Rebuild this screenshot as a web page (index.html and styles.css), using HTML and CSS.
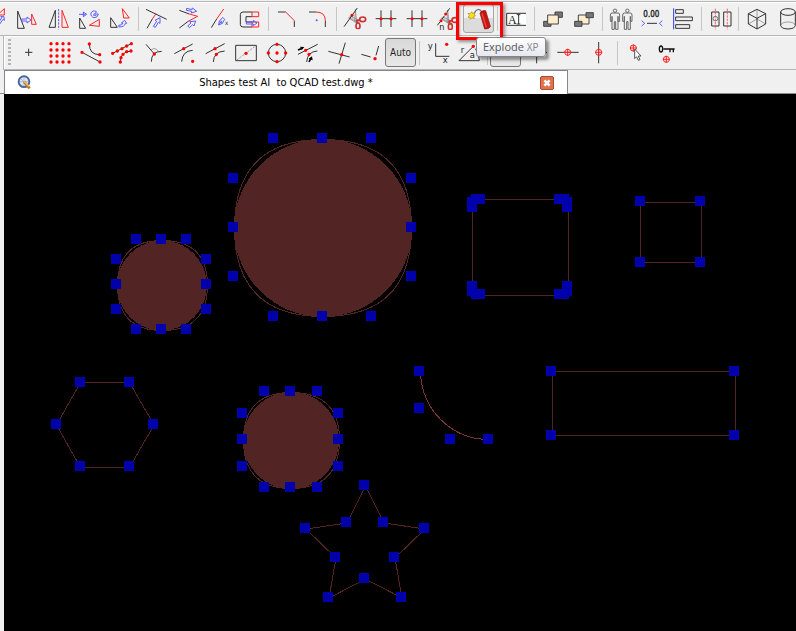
FILE: index.html
```html
<!DOCTYPE html>
<html lang="en">
<head>
<meta charset="utf-8">
<title>Shapes test AI to QCAD test.dwg</title>
<link rel="stylesheet" href="styles.css">
</head>
<body>
<svg class="defs" aria-hidden="true">
  <symbol id="target" viewBox="0 0 24 24"><g class="r target"><circle cx="12" cy="12" r="9"/><path d="M1 12H23M12 1V23"/></g></symbol>
  <symbol id="person" viewBox="0 0 34 66"><g class="g person"><circle cx="17" cy="7" r="5"/><path d="M8 14H26Q31 14 31 20V39H26V24M26 24V63H19V40H15V63H8V24M8 24V39H3V20Q3 14 8 14"/></g></symbol>
  <symbol id="scissors" viewBox="0 0 70 64"><path class="blade" d="M14 30L46 42L42 48ZM34 4L38 40L32 42ZM14 30L20 24L44 36"/><g class="ring"><ellipse cx="56" cy="34" rx="9" ry="7"/><ellipse cx="42" cy="54" rx="6" ry="9"/><path d="M36 38L48 36M38 38L40 46"/></g></symbol>
</svg>

<header>
  <div class="toolbar edit" role="toolbar" aria-label="Modify">
    <button aria-label="Scale"><svg viewBox="-60 9 93 93"><path class="r" d="M-8 45L13 26V45Z"/><path class="b" d="M-6 70L6 52L2 50L12 50L13 61L9 58L-2 74"/></svg></button>
    <button aria-label="Move"><svg viewBox="33 9 93 93"><path class="k" d="M53 33V85H73Z"/><path class="r" d="M95 42V73H109Z"/><path class="b" d="M65 57H81V51L93 60L81 69V63H65Z"/></svg></button>
    <button aria-label="Mirror"><svg viewBox="126 9 93 93"><path class="k" d="M166 31V82H147Z"/><path class="b dash" d="M176 27V88"/><path class="r" d="M186 31V82H205Z"/></svg></button>
    <button aria-label="Move and rotate"><svg viewBox="219 9 93 93"><path class="b" d="M237 43H257M250 36L260 43L250 50ZM290 35Q278 29 273 39Q271 50 282 53Q294 53 295 42H284L289 36M284 42Q280 42 281 46H289"/><path class="k" d="M239 54V85H257Z"/><path class="r" d="M268 76L298 58V79Z"/></svg></button>
    <button aria-label="Rotate"><svg viewBox="312 9 93 93"><path class="k" d="M332 53V82H352Z"/><path class="r" d="M367 26L388 54H371Z"/><path class="b" d="M356 76Q368 76 369 69H364L374 61L380 70H376Q374 81 357 81Z"/></svg></button>
    <span class="sep"></span>
    <button aria-label="Trim"><svg viewBox="423 9 93 93"><path class="k" d="M438 28L500 58M441 85L457 57"/><path class="r" d="M457 57L468 41"/><path class="b" d="M460 79L470 64L465 61L480 53L480 70L475 67L466 82Z"/></svg></button>
    <button aria-label="Trim both"><svg viewBox="516 9 93 93"><path class="k" d="M538 31L568 42M538 84L566 63"/><path class="r" d="M568 42L593 49L566 63"/><path class="b" d="M560 25L576 29L577 24L590 34L574 39L575 34L559 31ZM563 78L573 69L569 65L587 63L582 78L578 74L568 83Z"/></svg></button>
    <button aria-label="Lengthen"><svg viewBox="9 9 93 93"><path class="k" d="M34 83L50 57"/><path class="r" d="M50 57L71 27"/><path class="b" d="M56 75L58 64L68 52L74 58L67 70ZM58 64L67 70M56 75L66 62"/><text class="kt" x="75" y="74" font-size="18">x</text></svg></button>
    <button aria-label="Stretch"><svg viewBox="102 9 93 93"><path class="k" d="M156 36H129Q121 36 121 44V73Q121 81 129 81H156M156 50H138V66H156"/><path class="r" d="M156 36H176V50H156ZM156 66V81H176V66Z"/><path class="b" d="M139 66H160V61L171 69L160 77V72H139Z"/></svg></button>
    <span class="sep"></span>
    <button aria-label="Bevel"><svg viewBox="213 9 93 93"><path class="k" d="M234 36H257M283 62V81"/><path class="r" d="M257 36L283 62"/></svg></button>
    <button aria-label="Round"><svg viewBox="306 9 93 93"><path class="k" d="M327 36H348M376 62V81"/><path class="r" d="M348 36Q376 36 376 62"/><circle class="bf" cx="350" cy="61" r="3"/></svg></button>
    <span class="sep"></span>
    <button aria-label="Divide"><svg viewBox="417 9 93 93"><use href="#scissors" x="432" y="24" width="70" height="64"/><path class="k" d="M432 80L472 24"/><circle class="rf" cx="456" cy="46" r="4.500"/></svg></button>
    <button aria-label="Auto trim"><svg viewBox="510 9 93 93"><path class="k" d="M527 56H589M543 31V81M573 31V81"/><circle class="rf" cx="543" cy="56" r="4.500"/><circle class="rf" cx="573" cy="56" r="4.500"/></svg></button>
    <button aria-label="Break out segment"><svg viewBox="3 9 93 93"><path class="k" d="M36 56H66M36 31V81M66 31V81M20 56H32M70 56H82"/><circle class="rf" cx="36" cy="56" r="4.500"/><circle class="rf" cx="66" cy="56" r="4.500"/></svg></button>
    <button aria-label="Divide into parts"><svg viewBox="96 9 93 93"><use href="#scissors" x="109" y="26" width="70" height="64"/><path class="k" d="M112 76L120 66M126 57L134 47M140 37L149 25"/><circle class="rf" cx="137" cy="42" r="4.500"/><circle class="rf" cx="123" cy="62" r="4.500"/><text class="kt" x="118" y="89" font-size="27">n</text></svg></button>
    <button class="pressed explode" aria-label="Explode" aria-describedby="tip"><svg viewBox="189 9 93 93"><path class="fuse" d="M222 40Q235 18 246 37"/><path class="spark" d="M215 35L218 41L225 38L222 45L227 47L221 50L223 56L216 53L211 58L210 52L204 52L208 46L204 40L211 41Z"/><path class="stick" d="M240 40Q243 30 257 32L271 79Q268 88 254 87Z"/><path class="shine" d="M246 40L259 82"/></svg><span class="highlight"></span><span class="tip" id="tip" role="tooltip">Explode <small>XP</small></span></button>
    <span class="sep"></span>
    <button aria-label="Edit text"><svg viewBox="300 9 93 93"><path class="white" d="M320 40H378V76H320Z"/><path class="k" d="M378 40H320V76H378M350 44H361M350 72H361M356 44V72"/><text class="serif" x="324" y="71" font-size="36">A</text></svg></button>
    <span class="sep"></span>
    <button aria-label="Bring to front"><svg viewBox="411 9 93 93"><path class="dark" d="M465 36H487V52H465ZM431 64H453V79H431Z"/><path class="cream" d="M443 45H475V72H443Z"/></svg></button>
    <button aria-label="Send to back"><svg viewBox="504 9 93 93"><path class="cream" d="M535 45H567V72H535Z"/><path class="dark" d="M558 38H580V53H558ZM524 64H546V79H524Z"/></svg></button>
    <span class="sep"></span>
    <button aria-label="Copy properties"><svg viewBox="15 9 93 93"><use href="#person" x="28" y="25" width="34" height="66"/><use href="#person" x="65" y="25" width="34" height="66"/></svg></button>
    <button aria-label="Dimension"><svg viewBox="108 9 93 93"><text class="kt heavy" x="130" y="50" font-size="24">0.00</text><path class="b" d="M125 62L134 70L125 78M187 62L178 70L187 78"/><path class="k" d="M141 70H171"/></svg></button>
    <button aria-label="Align"><svg viewBox="201 9 93 93"><path class="blue" d="M221 25V88"/><path class="k" d="M227 29H250V40H227ZM227 51H277V62H227ZM227 74H269V85H227Z"/></svg></button>
    <span class="sep"></span>
    <button aria-label="Views"><svg viewBox="312 9 93 93"><path class="k" d="M335 36H357V78H335ZM371 36H393V78H371Z"/><path class="r thin dash" d="M346 26V88M382 26V88"/><circle class="g" cx="346" cy="56" r="7"/></svg></button>
    <span class="sep"></span>
    <button aria-label="Box"><svg viewBox="423 9 93 93"><path class="g thin" d="M471 28V57M445 72L471 57L497 72"/><path class="k" d="M471 28L497 41V72L471 87L445 72V41ZM445 41L471 55L497 41M471 55V87"/></svg></button>
    <button aria-label="Cylinder"><svg viewBox="516 9 93 93"><ellipse class="k" cx="564" cy="36" rx="22" ry="10"/><path class="k" d="M542 36V76Q543 86 564 87Q585 86 586 76V36"/><path class="g thin" d="M542 76Q546 66 564 66Q582 66 586 76"/></svg></button>
  </div>

  <div class="toolbar snap" role="toolbar" aria-label="Snap">
    <span class="grip-handle"></span>
    <button aria-label="Free positioning"><svg viewBox="39 111 93 93"><path class="k" d="M75 157H97M86 146V168"/></svg></button>
    <button aria-label="Grid"><svg viewBox="132 111 93 93"><path class="dots" d="M153 131h0M171 131h0M189 131h0M207 131h0M153 150h0M171 150h0M189 150h0M207 150h0M153 168h0M171 168h0M189 168h0M207 168h0M153 186h0M171 186h0M189 186h0M207 186h0"/></svg></button>
    <button aria-label="End points"><svg viewBox="225 111 93 93"><path class="k" d="M246 157L300 186M268 132Q268 164 299 164"/><path class="dots" d="M246 157h0M300 186h0M268 132h0M299 164h0"/></svg></button>
    <button aria-label="Points on entity"><svg viewBox="318 111 93 93"><path class="k" d="M338 160L394 131M361 186Q360 155 394 153"/><path class="dots" d="M338 160h0M352 153h0M366 146h0M380 138h0M394 131h0M361 186h0M363 173h0M369 163h0M380 155h0M393 153h0"/></svg></button>
    <button aria-label="Perpendicular"><svg viewBox="411 111 93 93"><path class="k" d="M438 133L463 162M485 154Q454 154 454 185"/><path class="g thin" d="M453 150Q461 142 470 148L475 154"/><path class="dots" d="M463 162h0"/></svg></button>
    <button aria-label="Tangential"><svg viewBox="504 111 93 93"><path class="k" d="M523 161L578 132M545 185Q547 153 578 151"/><path class="dots" d="M551 146h0M578 184h0"/></svg></button>
    <button aria-label="On entity"><svg viewBox="-3 111 93 93"><path class="k" d="M17 161L74 131M40 186Q41 155 74 153"/><path class="dots" d="M45 146h0M49 163h0"/></svg></button>
    <button aria-label="Center"><svg viewBox="90 111 93 93"><path class="k" d="M107 136H169V182H107Z"/><path class="g thin dash" d="M110 180L167 138"/><path class="dots" d="M138 160h0"/></svg></button>
    <button aria-label="Reference points"><svg viewBox="183 111 93 93"><circle class="k" cx="231" cy="159" r="26"/><path class="dots" d="M231 133h0M231 159h0M231 185h0M205 159h0M257 159h0"/></svg></button>
    <button aria-label="Middle"><svg viewBox="276 111 93 93"><path class="k" d="M294 163L353 133M320 186Q322 155 352 153"/><path class="fat" d="M294 150L303 146M327 186L332 176"/><path class="kf" d="M300 140L313 141L305 151ZM326 176L336 169L338 181Z"/><path class="dots" d="M317 151h0M327 163h0"/></svg></button>
    <button aria-label="Intersection"><svg viewBox="369 111 93 93"><path class="k" d="M385 154L449 171M436 128L417 191"/><path class="dots" d="M425 164h0"/></svg></button>
    <button aria-label="Manual intersection"><svg viewBox="462 111 93 93"><path class="k" d="M484 163L512 171M536 138L528 166"/><path class="dots" d="M525 176h0"/></svg></button>
    <button class="pressed auto">Auto</button>
    <span class="sep"></span>
    <button aria-label="Cartesian"><svg viewBox="66 111 93 93"><path class="k" d="M107 130V169H148"/><text class="kt" x="83" y="146" font-size="28">y</text><text class="kt" x="128" y="190" font-size="28">x</text><path class="dots" d="M140 133h0"/></svg></button>
    <button aria-label="Polar"><svg viewBox="159 111 93 93"><path class="k" d="M238 182H177L220 139M226 146Q238 160 238 182"/><text class="kt" x="182" y="158" font-size="28">r</text><text class="kt" x="209" y="175" font-size="28">a</text><path class="dots" d="M220 139h0"/></svg></button>
    <span class="sep"></span>
    <button class="pressed" aria-label="No restriction"></button>
    <button aria-label="Orthogonal"><svg viewBox="363 111 93 93"><path class="k" d="M379 157H441M410 126V190"/></svg></button>
    <button aria-label="Horizontal"><svg viewBox="456 111 93 93"><path class="k" d="M472 157H536"/><use href="#target" x="491" y="145" width="24" height="24"/></svg></button>
    <button aria-label="Vertical"><svg viewBox="549 111 93 93"><path class="k" d="M596 126V190"/><use href="#target" x="584" y="145" width="24" height="24"/></svg></button>
    <span class="sep"></span>
    <button aria-label="Set relative zero"><svg viewBox="60 111 93 93"><use href="#target" x="88" y="132" width="24" height="24"/><path class="pointer" d="M104 147V176L110 170L115 181L120 179L115 168H123Z"/></svg></button>
    <button aria-label="Lock relative zero"><svg viewBox="153 111 93 93"><ellipse class="key" cx="183" cy="147" rx="5" ry="9"/><path class="key" d="M190 147H224M210 148V157M220 148V157"/><use href="#target" x="187" y="166" width="24" height="24"/></svg></button>
  </div>

  <div class="tabs">
    <div class="tab">
      <svg class="logo" viewBox="51 222 45 45"><circle cx="72" cy="242" r="16" fill="#dfe6f3" stroke="#4a659c" stroke-width="6"/><path d="M58 242H85M72 229V256M62 233L82 252" stroke="#91a6cb" stroke-width="2"/><path d="M72 242L89 262" stroke="#b67824" stroke-width="8"/><path d="M72 241L87 256" stroke="#f2c35d" stroke-width="4"/></svg>
      <span class="name">Shapes test AI  to QCAD test.dwg *</span>
      <button class="close" aria-label="Close"><svg viewBox="0 0 14 14"><path d="M4 4L10 10M10 4L4 10"/></svg></button>
    </div>
  </div>
</header>

<main>
  <svg class="drawing" width="792" height="537" viewBox="4 94 792 537" role="img" aria-label="Drawing with selected shapes">
    <g class="solid"><circle cx="323" cy="228" r="89"/><circle cx="162" cy="285.500" r="45"/><ellipse cx="291" cy="440.500" rx="48" ry="48.500"/></g>
    <g class="line">
      <path d="M234.500 228C234.500 169 264 139.500 323 139.500S411.500 169 411.500 228S382 316.500 323 316.500S234.500 287 234.500 228Z"/>
      <path d="M117.500 285C117.500 255 132 240.500 162 240.500S207.500 255 207.500 285S192 330.500 162 330.500S117.500 315 117.500 285Z"/>
      <path d="M243.500 440C243.500 408 259 392.500 291 392.500S339.500 408 339.500 440S323 488.500 291 488.500S243.500 472 243.500 440Z"/>
      <rect x="472.500" y="199.500" width="96" height="96"/>
      <rect x="640.500" y="202.500" width="61" height="60"/>
      <rect x="552.500" y="371.500" width="183" height="64"/>
      <path d="M80.500 382.500H129.500L154 425L129.500 467.500H80.500L56.500 425Z"/>
      <path d="M365.500 486L384 523L425 529L395 558L402 598L365.500 579L329 598L336 558L306 529L347 523Z"/>
      <path class="arc" d="M420.500 371C421 409 451 439.500 489 439.500"/>
    </g>
    <g class="grips">
      <rect x="268" y="133"/><rect x="317" y="133"/><rect x="366" y="133"/><rect x="228" y="173"/><rect x="406" y="173"/><rect x="228" y="222"/><rect x="406" y="222"/><rect x="228" y="271"/><rect x="406" y="271"/><rect x="268" y="311"/><rect x="317" y="311"/><rect x="366" y="311"/>
      <rect x="131" y="234"/><rect x="156" y="234"/><rect x="181" y="234"/><rect x="111" y="254"/><rect x="201" y="254"/><rect x="111" y="279"/><rect x="201" y="279"/><rect x="111" y="304"/><rect x="201" y="304"/><rect x="131" y="324"/><rect x="156" y="324"/><rect x="181" y="324"/>
      <rect x="259" y="386"/><rect x="285" y="386"/><rect x="312" y="386"/><rect x="237" y="408"/><rect x="333" y="408"/><rect x="237" y="434"/><rect x="333" y="434"/><rect x="237" y="461"/><rect x="333" y="461"/><rect x="259" y="482"/><rect x="285" y="482"/><rect x="312" y="482"/>
      <rect x="471" y="194"/><rect x="475" y="194"/><rect x="467" y="197"/><rect x="467" y="202"/><rect x="554" y="194"/><rect x="559" y="194"/><rect x="562" y="197"/><rect x="562" y="202"/><rect x="467" y="281"/><rect x="467" y="286"/><rect x="471" y="289"/><rect x="475" y="289"/><rect x="554" y="289"/><rect x="559" y="289"/><rect x="562" y="281"/><rect x="562" y="286"/>
      <rect x="635" y="196"/><rect x="695" y="196"/><rect x="635" y="257"/><rect x="695" y="257"/>
      <rect x="546" y="366"/><rect x="729" y="366"/><rect x="546" y="430"/><rect x="729" y="430"/>
      <rect x="75" y="377"/><rect x="124" y="377"/><rect x="51" y="419"/><rect x="148" y="419"/><rect x="75" y="461"/><rect x="124" y="461"/>
      <rect x="414" y="366"/><rect x="414" y="403"/><rect x="445" y="434"/><rect x="483" y="434"/>
      <rect x="359" y="480"/><rect x="341" y="517"/><rect x="378" y="517"/><rect x="300" y="523"/><rect x="419" y="523"/><rect x="330" y="552"/><rect x="389" y="552"/><rect x="359" y="573"/><rect x="323" y="592"/><rect x="396" y="592"/>
    </g>
  </svg>
</main>
</body>
</html>
```
FILE: styles.css
```css
* { box-sizing: border-box; }

body {
  margin: 0;
  min-height: 100vh;
  display: flex;
  flex-direction: column;
  overflow: hidden;
  background: #f0f0f0;
  color: #000;
  font-family: "DejaVu Sans Condensed", "DejaVu Sans", sans-serif;
  font-size: 11px;
}

.defs { position: absolute; width: 0; height: 0; }

/* Toolbars */
.toolbar {
  display: flex;
  align-items: center;
  border-bottom: 1px solid #b6b6b6;
}
.edit {
  margin-left: -20px;
  padding: 1px 0;
  border-top: 1px solid #b6b6b6;
  margin-top: 1px;
  box-shadow: inset 0 1px #fff;
}
.snap {
  margin-left: 3px;
  padding: 1px 0;
  border-left: 1px solid #b6b6b6;
  box-shadow: inset 1px 1px #fff;
}
.toolbar button {
  position: relative;
  flex: none;
  width: 31px;
  height: 31px;
  padding: 0;
  border: 0;
  background: none;
  font: inherit;
  color: #222;
}
.toolbar button > svg { display: block; width: 31px; height: 31px; }
.sep {
  flex: none;
  width: 6px;
  height: 24px;
  background: linear-gradient(#c6c6c6, #c6c6c6) center / 1px 100% no-repeat;
}
.grip-handle {
  flex: none;
  width: 3px;
  height: 27px;
  margin: 0 2px 0 4px;
  background: repeating-linear-gradient(#b4b4b4 0 2px, transparent 2px 4px);
}

.toolbar .pressed::before {
  content: "";
  position: absolute;
  inset: 1px 0;
  border: 1px solid #777;
  border-radius: 3px;
  background: linear-gradient(#d8d8d8, #e8e8e8);
  z-index: -1;
}
.toolbar .pressed { z-index: 1; }
.toolbar .auto { font-size: 10px; }
.toolbar .explode { z-index: 2; }
.toolbar .explode::before {
  border-color: #a4a4a4;
  background: linear-gradient(#f2f2f2 50%, #dcdcdc 50%);
}

.highlight {
  position: absolute;
  inset: -1px -9px -6px -7px;
  border: 3px solid #f00;
  box-shadow: 2px 2px 3px #0006, inset 1px 1px 2px #0005;
}
.tip {
  position: absolute;
  left: 13px;
  top: 34px;
  padding: 0 6px;
  border: 1px solid #868686;
  border-radius: 3px;
  background: linear-gradient(#fff, #e6e7f0);
  box-shadow: 3px 3px 3px #0006;
  color: #575757;
  font: 11px/18px "Open Sans", sans-serif;
  white-space: nowrap;
}
.tip small { font-size: 10px; color: #858585; }

/* Icon strokes and fills */
.k, .r, .b, .g, .blue { fill: none; stroke-width: 3; }
.k { stroke: #333; }
.r { stroke: #f22; }
.b { stroke: #5c5cff; }
.g { stroke: #777; }
.blue { stroke: #33f; }
.target { stroke-width: 3; }
.person { stroke: #666; }
.thin { stroke-width: 2; }
.dash { stroke-dasharray: 7 3; }
.rf { fill: #f00; }
.bf { fill: #55f; }
.kf { fill: #000; }
.kt { fill: #222; font-family: "DejaVu Sans Condensed", sans-serif; }
.heavy { stroke: #222; stroke-width: 1; }
.serif { fill: #222; font-family: "Liberation Serif", serif; }
.white { fill: #fff; }
.fat { fill: none; stroke: #000; stroke-width: 5; }
.dots { fill: none; stroke: #f00; stroke-width: 10; stroke-linecap: round; }
.blade { fill: #ccc; stroke: #888; stroke-width: 2; }
.ring { fill: none; stroke: #c33; stroke-width: 5; }
.fuse { fill: none; stroke: #777; stroke-width: 4; }
.spark { fill: #ffe11c; stroke: #a88b20; stroke-width: 2; }
.stick { fill: #c91414; stroke: #861111; stroke-width: 2; }
.shine { fill: none; stroke: #f04b40; stroke-width: 4; }
.dark { fill: #777; stroke: #444; stroke-width: 3; }
.cream { fill: #ffedcd; stroke: #444; stroke-width: 3; }
.pointer { fill: #fff; stroke: #555; stroke-width: 3; }
.key { fill: none; stroke: #111; stroke-width: 4; }

/* Document tabs */
.tabs {
  height: 24px;
  padding-left: 4px;
  border-bottom: 1px solid #8a8a8a;
}
.tab {
  display: flex;
  align-items: center;
  width: 71.2%;
  height: 24px;
  padding: 0 13px 0 12px;
  border: 1px solid #85858d;
  border-bottom: 0;
  background: #fff;
}
.logo { flex: none; width: 15px; height: 15px; }
.name { flex: 1; text-align: center; white-space: pre; }
.close {
  flex: none;
  width: 14px;
  height: 14px;
  padding: 0;
  border: 1px solid #b3482b;
  border-radius: 2px;
  background: #e0734f;
}
.close svg { display: block; width: 12px; height: 12px; }
.close path { stroke: #fff; stroke-width: 3; }

/* Drawing area */
main {
  flex: 1;
  margin-left: 4px;
  background: #000;
  overflow: hidden;
}
.drawing { display: block; shape-rendering: crispEdges; }
.solid { fill: #522424; }
.line { fill: none; stroke: #522424; }
.arc { stroke: #7c3535; }
.grips { fill: #0000ac; }
.grips rect { width: 10px; height: 10px; }
```
